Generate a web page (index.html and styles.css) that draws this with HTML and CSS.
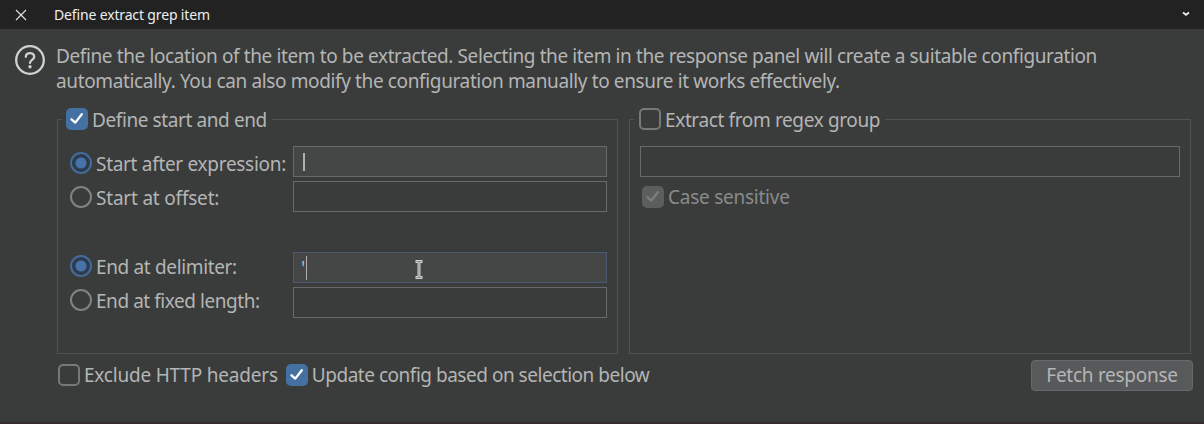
FILE: index.html
```html
<!DOCTYPE html>
<html lang="en">
<head>
<meta charset="utf-8">
<title>Define extract grep item</title>
<link rel="stylesheet" href="styles.css">
</head>
<body>
<div class="dialog">
  <header class="titlebar">
    <svg class="close" width="12" height="12" viewBox="0 0 12 12"><path d="M1 1 L11 11 M11 1 L1 11"/></svg>
    <span class="title">Define extract grep item</span>
    <svg class="shade" width="8" height="6" viewBox="0 0 8 6"><path d="M1 1.5 L4 3.8 L7 1.5"/></svg>
  </header>
  <section class="intro">
    <svg class="help" width="32" height="32" viewBox="0 0 32 32"><circle cx="16" cy="16" r="13.8"/><path d="M11.8 12.8 C11.8 7.8 20.2 7.8 20.2 12.8 C20.2 15.9 16 15.8 16 18.9"/><circle class="dot" cx="16" cy="22.8" r="1.7"/></svg>
    <p class="intro-text"><span class="line1">Define the location of the item to be extracted. Selecting the item in the response panel will create a suitable configuration</span><br><span class="line2">automatically. You can also modify the configuration manually to ensure it works effectively.</span></p>
  </section>
  <main class="groups">
    <fieldset class="group">
      <legend><span class="check on"><svg viewBox="0 0 22 22"><path d="M5.5 11.3 L9.3 14.6 L15.8 6.2"/></svg></span><span class="t-define">Define start and end</span></legend>
      <div class="rows">
        <label class="choice row1"><span class="radio on"></span><span class="t-after">Start after expression:</span></label>
        <div class="field active"><span class="caret first"></span></div>
        <label class="choice row2"><span class="radio"></span><span class="t-offset">Start at offset:</span></label>
        <div class="field"></div>
        <label class="choice row3"><span class="radio on"></span><span class="t-delim">End at delimiter:</span></label>
        <div class="field focus"><span class="value">'</span><span class="caret thin"></span>
          <svg class="pointer" width="10" height="22" viewBox="0 0 10 22"><path class="outer" d="M1.5 2.5 H8.5 M1.5 18.5 H8.5 M5 2.5 V18.5"/><path class="inner" d="M2.5 2.5 H7.5 M2.5 18.5 H7.5 M5 3 V18"/></svg>
        </div>
        <label class="choice row4"><span class="radio"></span><span class="t-fixed">End at fixed length:</span></label>
        <div class="field"></div>
      </div>
    </fieldset>
    <fieldset class="group regex">
      <legend><span class="check"></span><span class="t-extract">Extract from regex group</span></legend>
      <div class="field wide"></div>
      <label class="choice case"><span class="check disabled"><svg viewBox="0 0 22 22"><path d="M5.5 11.3 L9.3 14.6 L15.8 6.2"/></svg></span><span class="t-case">Case sensitive</span></label>
    </fieldset>
  </main>
  <footer class="footer">
    <label class="choice exclude"><span class="check"></span><span class="t-exclude">Exclude HTTP headers</span></label>
    <label class="choice"><span class="check on"><svg viewBox="0 0 22 22"><path d="M5.5 11.3 L9.3 14.6 L15.8 6.2"/></svg></span><span class="t-update">Update config based on selection below</span></label>
    <button class="fetch" type="button">Fetch response</button>
  </footer>
</div>
</body>
</html>
```
FILE: styles.css
```css
* { box-sizing: border-box; }
body { margin: 0; background: #3a3c3b; color: #b4b5b5; font: 19px/24px "Noto Sans", "Open Sans", sans-serif; }
.dialog { width: 1204px; height: 424px; overflow: hidden; display: flex; flex-direction: column; border-bottom: 2px solid #352a30; }
.titlebar { flex: none; height: 29px; background: #222; display: flex; align-items: center; padding: 0 14px 0 15px; color: #eee; font-size: 14px; }
.title { margin-left: 27px; flex: 1; letter-spacing: -0.15px; }
.close path { fill: none; stroke: #e4e4e4; stroke-width: 1.1; }
.shade { margin-bottom: 1px; }
.shade path { fill: none; stroke: #eee; stroke-width: 1.8; }
.intro { flex: none; height: 77px; padding: 15px 0 0 14px; display: flex; }
.help { flex: none; fill: none; stroke: #d0d1d1; stroke-width: 2.3; stroke-linecap: round; }
.help .dot { fill: #d0d1d1; stroke: none; }
.intro-text { margin: 0 0 0 10px; line-height: 25px; white-space: nowrap; }
.line1 { letter-spacing: -0.39px; }
.line2 { letter-spacing: -0.37px; }
.groups { flex: none; display: flex; gap: 11px; padding-left: 57px; height: 248px; }
.group { margin: 0; padding: 0; border: 1px solid #505252; width: 561px; height: 248px; min-width: 0; }
.group.regex { width: 562px; }
.group legend { height: 26px; margin-left: 4px; padding: 0 5px 0 4px; display: flex; align-items: center; white-space: nowrap; }
.group legend span:last-child { padding-top: 2px; }
.regex legend { padding-left: 5px; }
.check { flex: none; width: 22px; height: 22px; border: 2px solid #777979; border-radius: 5px; margin-right: 4px; }
.check.on { background: #4470a2; border: 0; }
.check.disabled { background: #5c5e5e; border: 0; }
.check svg { display: block; width: 22px; height: 22px; fill: none; stroke: #fff; stroke-width: 2.3; stroke-linecap: round; stroke-linejoin: round; }
.check.disabled svg { stroke: #7d7f7f; }
.rows { display: grid; grid-template-columns: 223px 314px; grid-template-rows: 35px 71px 35px 35px; align-items: start; padding: 14px 0 0 12px; }
.choice { display: flex; align-items: center; white-space: nowrap; }
.rows .choice { height: 26px; }
.rows .choice span:last-child { padding-top: 2px; }
.row1 { margin-top: 4px; }
.row2 { margin-top: 3px; }
.row3 { margin-top: 1px; }
.radio { flex: none; width: 22px; height: 22px; border: 2px solid #818383; border-radius: 50%; margin-right: 4px; }
.radio.on { border-color: #466b99; background: radial-gradient(circle, #4674aa 0 5px, #2d3b4c 6px); }
.field { height: 31px; border: 1px solid #686a6a; display: flex; align-items: center; }
.field.active { background: #454746; }
.field.focus { background: #454746; border-color: #4b5a72; position: relative; padding-left: 7px; }
.caret { width: 2px; height: 18px; background: #aeb0b0; }
.caret.first { margin-left: 9px; }
.caret.thin { width: 1px; height: 24px; }
.value { width: 5px; }
.pointer { position: absolute; left: 120px; top: 6px; fill: none; }
.pointer .outer { stroke: #d0d2d2; stroke-width: 3; }
.pointer .inner { stroke: #8a8c8c; stroke-width: 1; }
.wide { width: 540px; margin: 14px 0 0 10px; }
.case { margin: 8px 0 0 12px; color: #898b8b; }
.t-define { letter-spacing: -0.4px; }
.t-after { letter-spacing: -0.3px; }
.t-offset { letter-spacing: -0.2px; }
.t-delim { letter-spacing: -0.35px; }
.t-fixed { letter-spacing: -0.45px; }
.t-extract { letter-spacing: -0.37px; }
.t-case { letter-spacing: -0.25px; }
.t-exclude { letter-spacing: -0.2px; }
.t-update { letter-spacing: -0.48px; }
.footer { display: flex; align-items: center; height: 42px; padding-left: 58px; padding-right: 11px; }
.exclude { margin-right: 8px; }
.fetch { margin-left: auto; width: 162px; height: 31px; padding: 0; border: 1px solid #666869; border-radius: 4px; background: #58595a; color: #b4b5b5; font: inherit; letter-spacing: -0.28px; }
```
